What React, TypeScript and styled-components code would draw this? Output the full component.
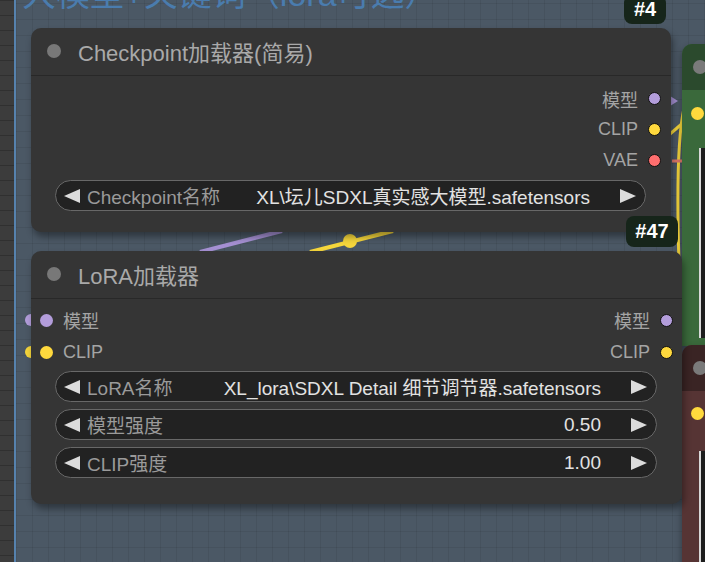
import React from "react";
import styled, { createGlobalStyle } from "styled-components";

const FONT = `"Liberation Sans", "Noto Sans CJK SC", sans-serif`;

const GlobalStyle = createGlobalStyle`
  html, body { margin: 0; padding: 0; background: #3b3b3b; }
  body { font-family: ${FONT}; }
  * { box-sizing: border-box; }
`;

const Canvas = styled.div`
  position: relative;
  width: 705px;
  height: 562px;
  overflow: hidden;
  background-color: #3c3c3c;
  background-image: linear-gradient(to bottom, rgba(0, 0, 0, 0.2) 1px, transparent 1px);
  background-size: 100% 15px;
`;

const Group = styled.div`
  position: absolute;
  left: 14px;
  top: -29px;
  right: -20px;
  bottom: -20px;
  border-left: 2px solid #5682ae;
  background-color: #4b5865;
  background-image:
    linear-gradient(to right, rgba(0, 0, 0, 0.07) 1px, transparent 1px),
    linear-gradient(to bottom, rgba(0, 0, 0, 0.07) 1px, transparent 1px);
  background-size: 16px 16px;
`;

const GroupTitle = styled.div`
  font-size: 34px;
  line-height: 46px;
  color: #4a7cae;
  padding-left: 6px;
  white-space: nowrap;
`;

const Wires = styled.svg`
  position: absolute;
  left: 0;
  top: 0;
  width: 705px;
  height: 562px;
  pointer-events: none;
`;

const NodeBox = styled.div<{ $x: number; $y: number; $w: number; $h: number }>`
  position: absolute;
  left: ${(p) => p.$x}px;
  top: ${(p) => p.$y}px;
  width: ${(p) => p.$w}px;
  height: ${(p) => p.$h}px;
  background: #353535;
  border-radius: 10px;
  box-shadow: 2px 5px 7px rgba(0, 0, 0, 0.38);
  display: flex;
  flex-direction: column;
`;

const TitleBar = styled.div`
  height: 48px;
  flex: none;
  display: flex;
  align-items: center;
  gap: 17px;
  padding-left: 16px;
  padding-bottom: 2px;
  border-bottom: 1px solid #282828;
`;

const TitleDot = styled.span`
  width: 14px;
  height: 14px;
  border-radius: 50%;
  background: #787878;
  flex: none;
`;

const TitleText = styled.span`
  font-size: 22px;
  color: #a9a9a9;
  white-space: nowrap;
`;

const Body = styled.div<{ $pt: number; $pr: number }>`
  display: flex;
  flex-direction: column;
  padding-top: ${(p) => p.$pt}px;
  padding-right: ${(p) => p.$pr}px;
`;

const SlotRow = styled.div<{ $h: number }>`
  height: ${(p) => p.$h}px;
  display: flex;
  align-items: center;
  justify-content: space-between;
`;

const Slot = styled.div<{ $side: "in" | "out" }>`
  display: flex;
  align-items: center;
  gap: 10px;
  font-size: 18px;
  color: #a4a4a4;
  padding-left: ${(p) => (p.$side === "in" ? 9 : 0)}px;
  margin-left: ${(p) => (p.$side === "out" ? "auto" : "0")};
`;

const Dot = styled.span<{ $c: string; $ring?: boolean }>`
  width: 13px;
  height: 13px;
  border-radius: 50%;
  background: ${(p) => p.$c};
  border: ${(p) => (p.$ring ? "1.5px solid #111" : "none")};
  flex: none;
`;

const WidgetList = styled.div<{ $gap: number; $mt: number }>`
  display: flex;
  flex-direction: column;
  gap: ${(p) => p.$gap}px;
  margin-top: ${(p) => p.$mt}px;
  padding: 0 25px 0 24px;
`;

const Widget = styled.div`
  height: 31px;
  display: flex;
  align-items: center;
  border: 1px solid #686868;
  border-radius: 16px;
  background: #222222;
  padding: 0 9px 0 8px;
  font-size: 19px;
  white-space: nowrap;
`;

const ArrowL = styled.span`
  width: 0;
  height: 0;
  border-top: 7px solid transparent;
  border-bottom: 7px solid transparent;
  border-right: 16px solid #dcdcdc;
  flex: none;
`;

const ArrowR = styled.span`
  width: 0;
  height: 0;
  border-top: 7px solid transparent;
  border-bottom: 7px solid transparent;
  border-left: 16px solid #dcdcdc;
  flex: none;
`;

const WLabel = styled.span`
  color: #9a9a9a;
  margin-left: 7px;
`;

const WValue = styled.span`
  color: #e2e2e2;
  margin-left: auto;
  margin-right: 30px;
`;

const Badge = styled.div<{ $x: number; $y: number; $w: number; $h: number }>`
  position: absolute;
  left: ${(p) => p.$x}px;
  top: ${(p) => p.$y}px;
  width: ${(p) => p.$w}px;
  height: ${(p) => p.$h}px;
  border-radius: 8px;
  background: #16251a;
  color: #ffffff;
  font-weight: bold;
  font-size: 20px;
  display: flex;
  align-items: center;
  justify-content: center;
`;

const SideNode = styled.div<{ $y: number; $h: number; $title: string; $body: string }>`
  position: absolute;
  left: 682px;
  top: ${(p) => p.$y}px;
  width: 60px;
  height: ${(p) => p.$h}px;
  border-radius: 10px 0 0 0;
  background: ${(p) => p.$body};
  display: flex;
  flex-direction: column;
  box-shadow: -1px 3px 6px rgba(0, 0, 0, 0.3);
  & > header {
    background: ${(p) => p.$title};
  }
`;

const SideTitle = styled.header`
  height: 46px;
  flex: none;
  display: flex;
  align-items: center;
  padding-left: 11px;
  border-radius: 10px 0 0 0;
`;

const SideDot = styled.span`
  width: 14px;
  height: 14px;
  border-radius: 50%;
  background: #7a7a7a;
`;

const SideInput = styled.div`
  height: 46px;
  display: flex;
  align-items: center;
  padding-left: 9px;
`;

const SidePanel = styled.div<{ $mt: number; $h: number }>`
  margin-top: ${(p) => p.$mt}px;
  margin-left: 17px;
  height: ${(p) => p.$h}px;
  border-left: 2px solid #d8d8d8;
  background: #1d1d1d;
`;

const PURPLE = "#b39ddb";
const YELLOW = "#ffd93d";
const RED = "#ff6e6e";

type WidgetProps = { label: string; value: string };

function ComboWidget({ label, value }: WidgetProps) {
  return (
    <Widget>
      <ArrowL />
      <WLabel>{label}</WLabel>
      <WValue>{value}</WValue>
      <ArrowR />
    </Widget>
  );
}

export default function App() {
  return (
    <>
      <GlobalStyle />
      <Canvas>
        <Group>
          <GroupTitle>大模型+关键词（lora可选）</GroupTitle>
        </Group>

        <Wires viewBox="0 0 705 562">
          <line x1="200" y1="252" x2="282" y2="231" stroke="#a590d3" strokeWidth="4" />
          <line x1="310" y1="252" x2="393" y2="231" stroke="#f5d63c" strokeWidth="4" />
          <circle cx="350" cy="241" r="7" fill="#f5d63c" />
          <path d="M 684 108 C 677 140, 677 200, 679 262" stroke="#f5d63c" strokeWidth="3" fill="none" />
          <path d="M 670 134 L 684 122" stroke="#f5d63c" strokeWidth="3" fill="none" />
          <path d="M 670 96 L 678 101 L 670 106 Z" fill="#a590d3" />
          <line x1="672" y1="161" x2="682" y2="161" stroke="#e0786a" strokeWidth="3" />
          <circle cx="31" cy="320" r="6" fill="#b39ddb" />
          <circle cx="31" cy="352" r="6" fill="#f5d63c" />
        </Wires>

        <SideNode $y={44} $h={302} $title="#2b4a2d" $body="#3a693b">
          <SideTitle>
            <SideDot />
          </SideTitle>
          <SideInput>
            <Dot $c={YELLOW} />
          </SideInput>
          <SidePanel $mt={12} $h={190} />
        </SideNode>

        <SideNode $y={345} $h={240} $title="#3a2424" $body="#563434">
          <SideTitle>
            <SideDot />
          </SideTitle>
          <SideInput>
            <Dot $c={YELLOW} />
          </SideInput>
          <SidePanel $mt={16} $h={140} />
        </SideNode>

        <NodeBox $x={31} $y={28} $w={640} $h={204}>
          <TitleBar>
            <TitleDot />
            <TitleText>Checkpoint加载器(简易)</TitleText>
          </TitleBar>
          <Body $pt={7} $pr={10}>
            <SlotRow $h={31}>
              <Slot $side="out">
                模型 <Dot $c={PURPLE} $ring />
              </Slot>
            </SlotRow>
            <SlotRow $h={31}>
              <Slot $side="out">
                CLIP <Dot $c={YELLOW} $ring />
              </Slot>
            </SlotRow>
            <SlotRow $h={31}>
              <Slot $side="out">
                VAE <Dot $c={RED} $ring />
              </Slot>
            </SlotRow>
          </Body>
          <WidgetList $gap={7} $mt={4}>
            <ComboWidget label="Checkpoint名称" value="XL\坛儿SDXL真实感大模型.safetensors" />
          </WidgetList>
        </NodeBox>

        <NodeBox $x={31} $y={251} $w={651} $h={253}>
          <TitleBar>
            <TitleDot />
            <TitleText>LoRA加载器</TitleText>
          </TitleBar>
          <Body $pt={5} $pr={9}>
            <SlotRow $h={32}>
              <Slot $side="in">
                <Dot $c={PURPLE} /> 模型
              </Slot>
              <Slot $side="out">
                模型 <Dot $c={PURPLE} $ring />
              </Slot>
            </SlotRow>
            <SlotRow $h={32}>
              <Slot $side="in">
                <Dot $c={YELLOW} /> CLIP
              </Slot>
              <Slot $side="out">
                CLIP <Dot $c={YELLOW} $ring />
              </Slot>
            </SlotRow>
          </Body>
          <WidgetList $gap={7} $mt={3}>
            <ComboWidget label="LoRA名称" value="XL_lora\SDXL Detail 细节调节器.safetensors" />
            <ComboWidget label="模型强度" value="0.50" />
            <ComboWidget label="CLIP强度" value="1.00" />
          </WidgetList>
        </NodeBox>

        <Badge $x={624} $y={-5} $w={42} $h={29}>#4</Badge>
        <Badge $x={626} $y={216} $w={52} $h={31}>#47</Badge>
      </Canvas>
    </>
  );
}
